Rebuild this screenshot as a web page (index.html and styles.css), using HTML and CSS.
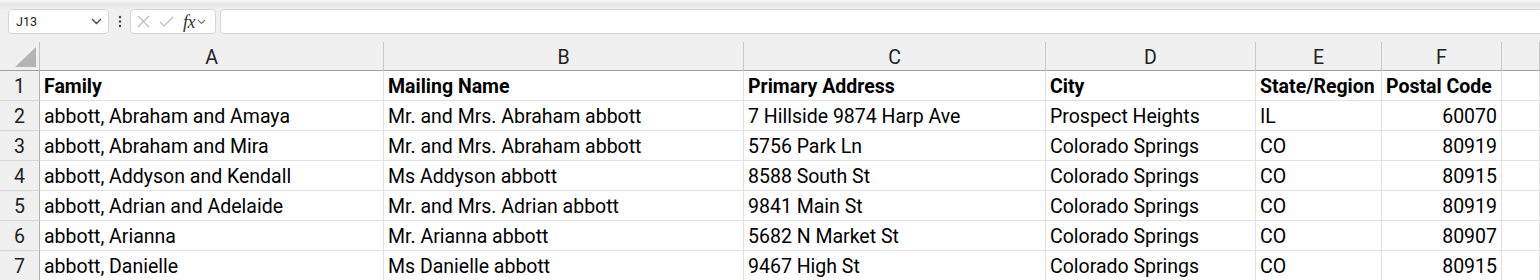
FILE: index.html
```html
<!DOCTYPE html>
<html lang="en">
<head>
    <meta charset="UTF-8">
    <meta name="viewport" content="width=device-width, initial-scale=1.0">
    <title>Family Mailing List</title>
    <link rel="stylesheet" href="styles.css">
</head>
<body>
    <div class="ribbon-edge"></div>

    <!-- Name box + formula bar -->
    <div class="formula-bar">
        <div class="name-box">
            <span>J13</span>
            <svg width="11" height="7" viewBox="0 0 11 7"><polyline points="1,1 5.5,5.5 10,1" fill="none" stroke="#444" stroke-width="1.3"/></svg>
        </div>
        <div class="grip">
            <svg width="4" height="13" viewBox="0 0 4 13"><circle cx="2" cy="2" r="1.2" fill="#444"/><circle cx="2" cy="6.5" r="1.2" fill="#444"/><circle cx="2" cy="11" r="1.2" fill="#444"/></svg>
        </div>
        <div class="fx-box">
            <svg width="13" height="13" viewBox="0 0 13 13"><path d="M1 1 L12 12 M12 1 L1 12" stroke="#bcbcbc" stroke-width="1.2"/></svg>
            <svg width="15" height="11" viewBox="0 0 15 11"><polyline points="1,6 5,10 14,1" fill="none" stroke="#bcbcbc" stroke-width="1.2"/></svg>
            <span class="fx">fx</span>
            <svg width="9" height="6" viewBox="0 0 9 6"><polyline points="1,1 4.5,4.5 8,1" fill="none" stroke="#777" stroke-width="1.1"/></svg>
        </div>
        <div class="formula-input"></div>
    </div>

    <!-- Worksheet grid -->
    <div class="sheet">
        <div class="corner"><span class="triangle"></span></div>
        <div class="col-head">A</div>
        <div class="col-head">B</div>
        <div class="col-head">C</div>
        <div class="col-head">D</div>
        <div class="col-head">E</div>
        <div class="col-head">F</div>
        <div class="col-head"></div>

        <div class="row-head">1</div>
        <div class="cell bold">Family</div>
        <div class="cell bold">Mailing Name</div>
        <div class="cell bold">Primary Address</div>
        <div class="cell bold">City</div>
        <div class="cell bold">State/Region</div>
        <div class="cell bold">Postal Code</div>
        <div class="cell"></div>

        <div class="row-head">2</div>
        <div class="cell">abbott, Abraham and Amaya</div>
        <div class="cell">Mr. and Mrs. Abraham abbott</div>
        <div class="cell">7 Hillside 9874 Harp Ave</div>
        <div class="cell">Prospect Heights</div>
        <div class="cell">IL</div>
        <div class="cell num">60070</div>
        <div class="cell"></div>

        <div class="row-head">3</div>
        <div class="cell">abbott, Abraham and Mira</div>
        <div class="cell">Mr. and Mrs. Abraham abbott</div>
        <div class="cell">5756 Park Ln</div>
        <div class="cell">Colorado Springs</div>
        <div class="cell">CO</div>
        <div class="cell num">80919</div>
        <div class="cell"></div>

        <div class="row-head">4</div>
        <div class="cell">abbott, Addyson and Kendall</div>
        <div class="cell">Ms Addyson abbott</div>
        <div class="cell">8588 South St</div>
        <div class="cell">Colorado Springs</div>
        <div class="cell">CO</div>
        <div class="cell num">80915</div>
        <div class="cell"></div>

        <div class="row-head">5</div>
        <div class="cell">abbott, Adrian and Adelaide</div>
        <div class="cell">Mr. and Mrs. Adrian abbott</div>
        <div class="cell">9841 Main St</div>
        <div class="cell">Colorado Springs</div>
        <div class="cell">CO</div>
        <div class="cell num">80919</div>
        <div class="cell"></div>

        <div class="row-head">6</div>
        <div class="cell">abbott, Arianna</div>
        <div class="cell">Mr. Arianna abbott</div>
        <div class="cell">5682 N Market St</div>
        <div class="cell">Colorado Springs</div>
        <div class="cell">CO</div>
        <div class="cell num">80907</div>
        <div class="cell"></div>

        <div class="row-head">7</div>
        <div class="cell">abbott, Danielle</div>
        <div class="cell">Ms Danielle abbott</div>
        <div class="cell">9467 High St</div>
        <div class="cell">Colorado Springs</div>
        <div class="cell">CO</div>
        <div class="cell num">80915</div>
        <div class="cell"></div>
    </div>
</body>
</html>
```

FILE: styles.css
```css
/* Page */
body {
    margin: 0;
    background: #f0f0f0;
    font-family: Roboto, 'Liberation Sans', sans-serif;
    color: #000;
    overflow: hidden;
}

/* Bottom edge of the ribbon */
.ribbon-edge {
    height: 9px;
    background: linear-gradient(#f6f6f6, #e6e6e6 45%, #eeeeee);
}

/* Formula bar row */
.formula-bar {
    display: flex;
    height: 25px;
    padding-left: 8px;
}

.name-box,
.fx-box,
.formula-input {
    box-sizing: border-box;
    height: 25px;
    background: #fff;
    border: 1px solid #d6d6d6;
    border-radius: 4px;
}

.name-box {
    width: 101px;
    display: flex;
    align-items: center;
    justify-content: space-between;
    padding: 0 6px 0 7px;
    font-size: 12.5px;
    color: #222;
}

.grip {
    width: 21px;
    display: flex;
    align-items: center;
    justify-content: center;
}

.fx-box {
    width: 86px;
    display: flex;
    align-items: center;
    padding-left: 6px;
}

.fx-box svg:nth-child(1) { margin-right: 9px; }
.fx-box svg:nth-child(2) { margin-right: 9px; }

.fx {
    font-family: 'Liberation Serif', serif;
    font-style: italic;
    font-size: 18px;
    color: #333;
    margin-right: 2px;
    line-height: 1;
    letter-spacing: -0.5px;
}

.formula-input {
    flex: 1;
    margin-left: 4px;
    margin-right: -6px;
}

/* Worksheet */
.sheet {
    margin-top: 8px;
    display: grid;
    grid-template-columns: 40px 344px 360px 302px 210px 126px 120px 1fr;
    grid-template-rows: 29px;
    grid-auto-rows: 30px;
    font-size: 19.5px;
}

.sheet > div {
    box-sizing: border-box;
    white-space: nowrap;
    overflow: hidden;
}

.corner {
    position: relative;
    border-right: 1px solid #c4c4c4;
    border-bottom: 1px solid #a0a0a0;
}

.triangle {
    position: absolute;
    left: 15px;
    bottom: 3px;
    width: 0;
    height: 0;
    border-left: 21px solid transparent;
    border-bottom: 20px solid #b4b4b4;
}

.col-head {
    text-align: center;
    line-height: 28px;
    padding-top: 2px;
    color: #222;
    border-right: 1px solid #c8c8c8;
    border-bottom: 1px solid #a0a0a0;
}

.row-head {
    text-align: center;
    line-height: 29px;
    padding-top: 1px;
    color: #222;
    border-right: 1px solid #b0b0b0;
    border-bottom: 1px solid #d8d8d8;
}

.cell {
    background: #fff;
    line-height: 29px;
    padding: 1px 4px 0 4px;
    border-right: 1px solid #e1e1e1;
    border-bottom: 1px solid #e1e1e1;
}

.bold {
    font-weight: bold;
}

.num {
    text-align: right;
}
```
